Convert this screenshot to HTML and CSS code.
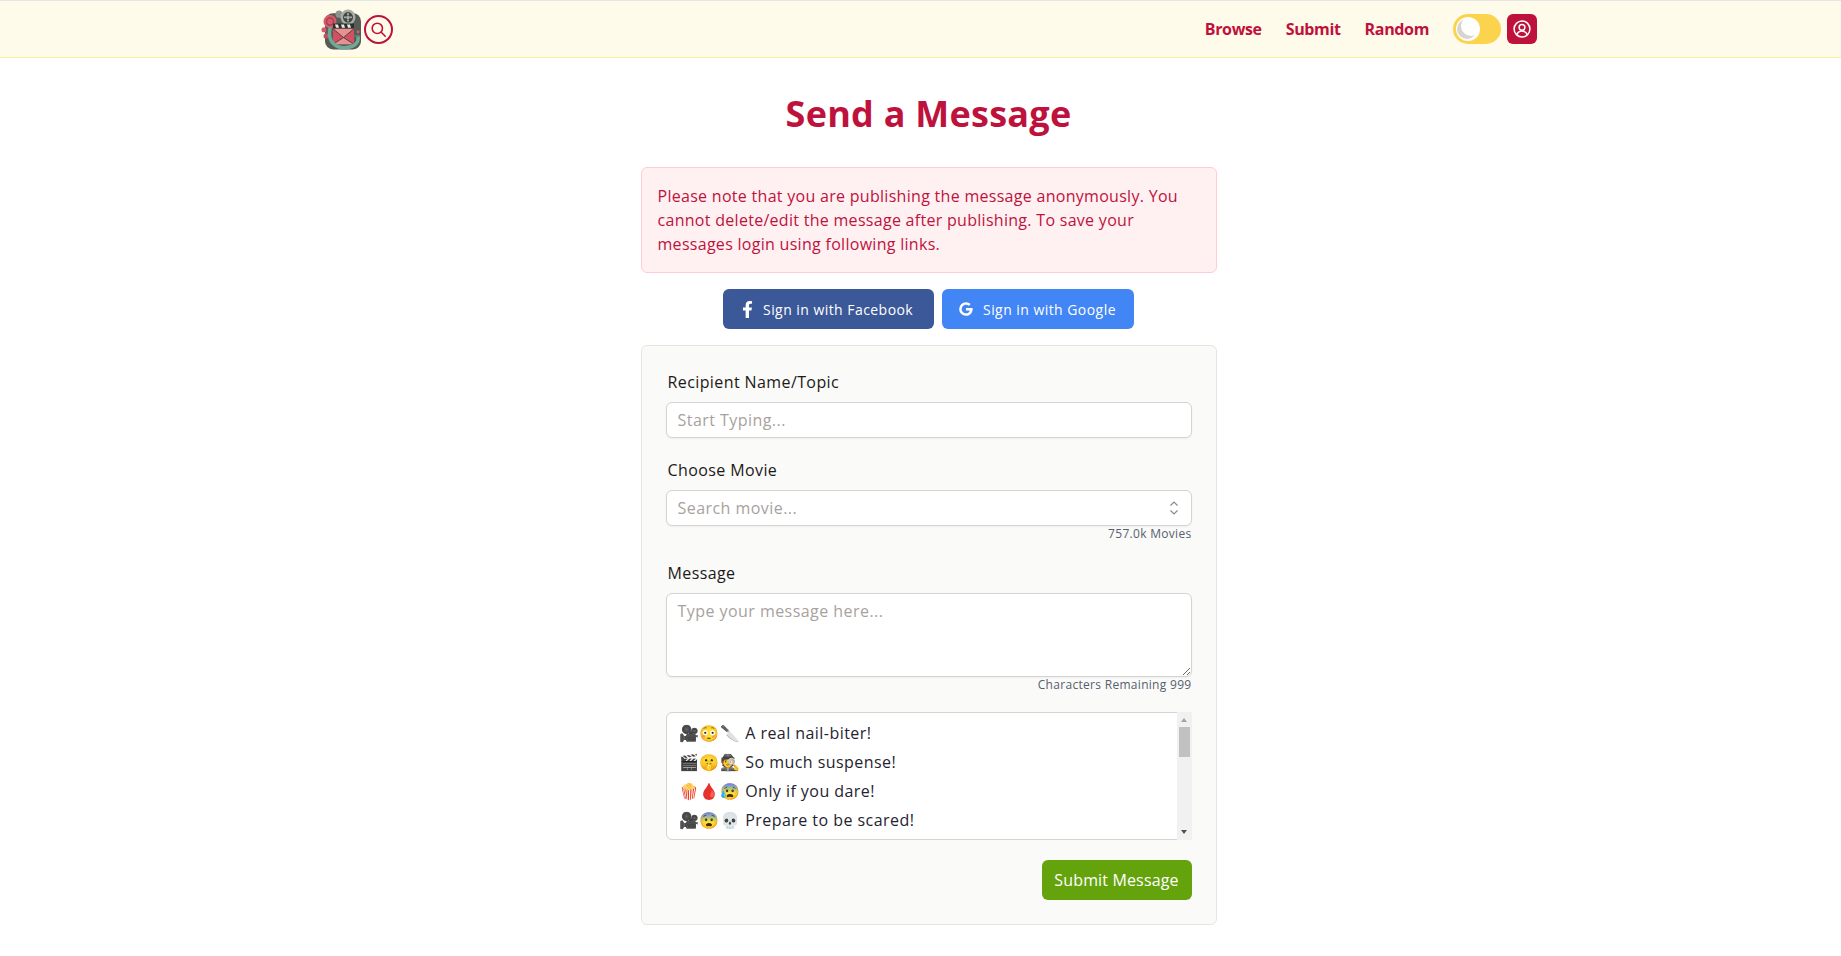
FILE: index.html
```html
<!DOCTYPE html>
<html lang="en">
<head>
<meta charset="utf-8">
<title>Send a Message</title>
<link rel="stylesheet" href="styles.css">
</head>
<body>
<header class="nav">
  <div class="nav-inner">
    <div class="nav-left">
      <svg class="logo" viewBox="0 0 41 39.500" preserveAspectRatio="none" aria-label="logo">
        <rect x="4" y="4" width="36" height="35" rx="8" fill="#565b55"/>
        <circle cx="9" cy="12" r="6.500" fill="#d65a6b"/>
        <circle cx="9" cy="12" r="3.500" fill="none" stroke="#9c3a4a" stroke-width="1.200"/>
        <circle cx="3" cy="20" r="2.500" fill="#d65a6b"/>
        <circle cx="5" cy="26" r="2.500" fill="#c44f62"/>
        <circle cx="18" cy="5" r="3.500" fill="#8d928c"/>
        <circle cx="27" cy="8" r="7.500" fill="#a7aca6"/>
        <circle cx="27" cy="8" r="5" fill="#3f4441"/>
        <circle cx="27" cy="8" r="1.800" fill="#a7aca6"/>
        <circle cx="27" cy="5" r="1.100" fill="#a7aca6"/>
        <circle cx="27" cy="11" r="1.100" fill="#a7aca6"/>
        <circle cx="24" cy="8" r="1.100" fill="#a7aca6"/>
        <circle cx="30" cy="8" r="1.100" fill="#a7aca6"/>
        <circle cx="37" cy="22" r="1.500" fill="#d65a6b"/>
        <rect x="12" y="14" width="21" height="5" fill="#2b2f2d"/>
        <path d="M14 15h3l1 3h-3zM20 15h3l1 3h-3zM26 15h3l1 3h-3z" fill="#ecece4"/>
        <rect x="12" y="19" width="21" height="15" fill="#ea8f92"/>
        <path d="M12 34V19l10.500 8.500L33 19v15l-10.500-6.500z" fill="#d2505f"/>
        <path d="M12 19l10.500 8.500L33 19M12 34l10.500-6.500L33 34" fill="none" stroke="#3f4441" stroke-width=".9"/>
        <path d="M9 19c-3 13 7 20 18 18 7-1 11-5 10-10" fill="none" stroke="#6fa893" stroke-width="3.500" stroke-linecap="round"/>
        <path d="M37 27c-1-2-3-2-4 0" fill="none" stroke="#4e8572" stroke-width="1.500"/>
      </svg>
      <button class="search-btn" aria-label="Search">
        <svg viewBox="0 0 24 24" class="search-icon"><circle cx="10.500" cy="10.500" r="6.500"/><path d="M15.500 15.500l5 5"/></svg>
      </button>
    </div>
    <nav class="nav-right">
      <a class="nav-link">Browse</a>
      <a class="nav-link">Submit</a>
      <a class="nav-link">Random</a>
      <div class="toggle"><span class="knob"><span class="moon"></span></span></div>
      <button class="user-btn" aria-label="Account">
        <svg viewBox="0 0 24 24" class="user-icon"><circle cx="12" cy="12" r="9.500"/><circle cx="12" cy="10" r="3.500"/><path d="M5.500 19c1.500-3 3.500-4.500 6.500-4.500s5 1.500 6.500 4.500"/></svg>
      </button>
    </nav>
  </div>
</header>
<main class="main">
  <h1 class="title">Send a Message</h1>
  <div class="alert">Please note that you are publishing the message anonymously. You cannot delete/edit the message after publishing. To save your messages login using following links.</div>
  <div class="socials">
    <a class="social fb">
      <svg viewBox="0 0 320 512" class="fb-icon"><path d="M279 288l14-93h-89v-60c0-25 12-50 52-50h41V7s-37-7-72-7c-73 0-121 45-121 125v70H23v93h81v224h100V288z"/></svg>
      Sign in with Facebook
    </a>
    <a class="social gg">
      <svg viewBox="0 0 24 24" class="g-icon"><path d="M21.800 10.500H12v3.700h5.600c-.6 2.800-2.900 4.300-5.600 4.300a6.500 6.500 0 1 1 4.300-11.400l2.700-2.700A10.300 10.300 0 0 0 12 1.700a10.300 10.300 0 1 0 0 20.600c5.500 0 10-3.900 10-10.300 0-.5-.1-1-.2-1.500z"/></svg>
      Sign in with Google
    </a>
  </div>
  <form class="card">
    <label class="label">Recipient Name/Topic</label>
    <input class="field" placeholder="Start Typing...">
    <label class="label label-next">Choose Movie</label>
    <div class="combo">
      <input class="field" placeholder="Search movie...">
      <svg viewBox="0 0 12 18" class="chevrons"><path d="M2.500 6.500L6 3l3.500 3.500M2.500 11.500L6 15l3.500-3.500"/></svg>
    </div>
    <div class="hint">757.0k Movies</div>
    <label class="label label-msg">Message</label>
    <textarea class="area" placeholder="Type your message here..."></textarea>
    <div class="hint">Characters Remaining 999</div>
    <div class="list">
      <div class="item">🎥😳🔪 A real nail-biter!</div>
      <div class="item">🎬🤫🕵️ So much suspense!</div>
      <div class="item">🍿🩸😰 Only if you dare!</div>
      <div class="item">🎥😨💀 Prepare to be scared!</div>
      <div class="scrollbar">
        <span class="arrow-up"></span>
        <span class="thumb"></span>
        <span class="arrow-down"></span>
      </div>
    </div>
    <div class="actions"><button type="button" class="submit">Submit Message</button></div>
  </form>
</main>
</body>
</html>
```
FILE: styles.css
```css
* { box-sizing: border-box; }
html, body { margin: 0; padding: 0; background: #fff; }
body { font-family: "Open Sans", "Noto Color Emoji", sans-serif; color: #1f2430; overflow: hidden; height: 956px; }
button { font-family: inherit; padding: 0; cursor: pointer; }

.nav { height: 58px; background: #fffbeb; border-top: 1px solid #e5e5e5; border-bottom: 1px solid #fbeea0; padding-left: 17px; }
.nav-inner { width: 1216px; height: 56px; margin: 0 auto; display: flex; align-items: center; justify-content: space-between; }
.nav-left { display: flex; align-items: center; gap: 2px; }
.logo { width: 41px; height: 41px; display: block; filter: blur(.35px); }
.search-btn { width: 29px; height: 29px; border: 2px solid #be123c; border-radius: 50%; background: transparent; display: flex; align-items: center; justify-content: center; }
.search-icon { width: 19px; height: 19px; fill: none; stroke: #be123c; stroke-width: 2; stroke-linecap: round; }
.nav-right { display: flex; align-items: center; }
.nav-link { font-size: 16px; font-weight: 700; color: #be123c; margin-right: 24px; letter-spacing: -.35px; }
.toggle { width: 48px; height: 30px; border-radius: 15px; background: #fcd34d; margin-right: 6px; padding: 3px; }
.knob { display: block; width: 24px; height: 24px; border-radius: 50%; background: #fff; position: relative; overflow: hidden; }
.moon { position: absolute; left: 1px; top: 2px; width: 20px; height: 20px; border-radius: 50%; box-shadow: inset 4px -3px 0 0 #d6d3d1; }
.user-btn { width: 30px; height: 30px; border: 0; border-radius: 6px; background: #be123c; display: flex; align-items: center; justify-content: center; }
.user-icon { width: 20px; height: 20px; fill: none; stroke: #fff; stroke-width: 1.800; }

.main { width: 576px; margin: 0 auto; padding-top: 31px; position: relative; left: 8px; }
.title { margin: 0 0 28px; height: 50px; line-height: 50px; text-align: center; font-size: 36px; font-weight: 700; color: #be123c; letter-spacing: .25px; }
.alert { border: 1px solid #fecdd3; border-radius: 6px; background: #fff1f2; color: #be123c; padding: 16px; font-size: 16px; line-height: 24px; height: 106px; letter-spacing: .29px; }
.socials { display: flex; justify-content: center; gap: 8px; margin: 16px 0; }
.social { height: 40px; border-radius: 6px; color: #fff; display: flex; align-items: center; font-size: 14px; letter-spacing: .45px; }
.fb { width: 211px; background: #3b5998; padding-left: 19px; gap: 10px; }
.gg { width: 192px; background: #4285f4; padding-left: 16px; gap: 9px; }
.fb-icon { width: 11px; height: 17px; fill: #fff; }
.g-icon { width: 16px; height: 16px; fill: #fff; }
.card { height: 580px; border: 1px solid #e7e5e4; border-radius: 6px; background: #fafaf9; padding: 24px; display: flex; flex-direction: column; }
.label { font-size: 16px; line-height: 24px; margin-left: 2px; color: #1c1917; height: 24px; font-weight: 500; letter-spacing: .4px; }
.label-next { margin-top: 20px; }
.label-msg { margin-top: 19px; }
.field { width: 100%; height: 36px; margin-top: 8px; display: block; border: 1px solid #d6d3d1; border-radius: 6px; background: #fff; padding: 0 11px; font: 16px "Open Sans", sans-serif; letter-spacing: .45px; box-shadow: 0 1px 2px rgba(0,0,0,.05); outline: 0; }
.field::placeholder, .area::placeholder { color: #a8a29e; opacity: 1; }
.combo { position: relative; }
.chevrons { position: absolute; right: 12px; top: 17px; width: 12px; height: 18px; fill: none; stroke: #8f8a85; stroke-width: 1.200; }
.hint { font-size: 12px; line-height: 16px; text-align: right; color: #57606e; height: 16px; letter-spacing: .3px; }
.area { width: 100%; height: 84px; margin-top: 8px; display: block; border: 1px solid #d6d3d1; border-radius: 6px; background: #fff; padding: 6px 11px; font: 16px "Open Sans", sans-serif; letter-spacing: .45px; box-shadow: 0 1px 2px rgba(0,0,0,.05); outline: 0; resize: vertical; }
.list { height: 128px; margin-top: 19px; border: 1px solid #d6d3d1; border-radius: 6px; background: #fff; padding: 6px 13px 0; flex: none; position: relative; }
.scrollbar { position: absolute; top: -1px; right: -1px; bottom: -1px; width: 15px; background: #f1f1f1; display: flex; flex-direction: column; align-items: center; padding-top: 6px; }
.arrow-up { width: 0; height: 0; border: solid transparent; border-width: 0 3.500px 4px; border-bottom-color: #a3a3a3; }
.thumb { width: 11px; height: 30px; background: #c1c1c1; margin-top: 5px; }
.arrow-down { width: 0; height: 0; border: solid transparent; border-width: 4px 3.500px 0; border-top-color: #505050; margin-top: auto; margin-bottom: 6px; }
.item { font-size: 16px; line-height: 29px; white-space: nowrap; letter-spacing: .45px; }
.actions { display: flex; justify-content: flex-end; margin-top: 20px; }
.submit { width: 150px; height: 40px; border: 0; border-radius: 6px; background: #65a30d; color: #fff; font-size: 16px; letter-spacing: .15px; }
```
